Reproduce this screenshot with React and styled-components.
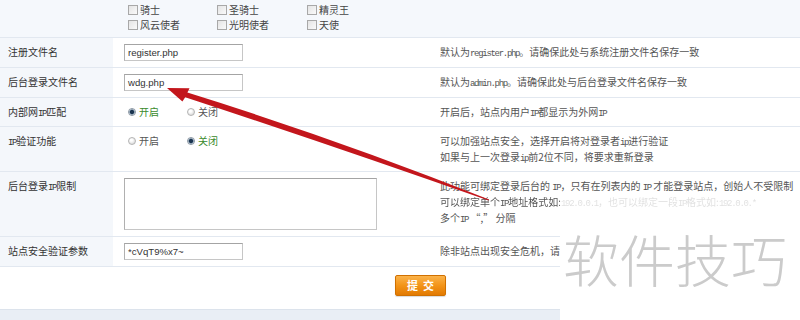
import React from "react";
import styled, { createGlobalStyle } from "styled-components";

const GlobalStyle = createGlobalStyle`
  html, body { margin: 0; padding: 0; background: #fff; }
  body { font-family: "Noto Sans CJK SC", "Liberation Sans", sans-serif; font-size: 10px; color: #333; }
`;

const Page = styled.div`
  position: relative;
  width: 800px;
  height: 320px;
  overflow: hidden;
  background: #fff;
`;

const Row = styled.div`
  display: grid;
  grid-template-columns: 113px 316px 1fr;
  border-bottom: 1px solid #e2e8f0;
  background: ${({ $tinted }) => ($tinted ? "#f5f8fc" : "#fff")};
`;

const LabelCell = styled.div`
  background: ${({ $plain }) => ($plain ? "transparent" : "#f4f7fb")};
  padding: ${({ $pad }) => $pad || "6px 0 6px 8px"};
  line-height: 16px;
  color: #333;
`;

const ValueCell = styled.div`
  padding: ${({ $pad }) => $pad || "6px 0 6px 11px"};
  line-height: 16px;
`;

const DescCell = styled.div`
  padding: 6px 0 6px 11px;
  line-height: 16px;
  color: #555;
  white-space: nowrap;
  min-width: 0;
`;

const DescLine = styled.div`
  height: 16px;
  overflow: hidden;
  width: ${({ $clip }) => ($clip ? "120px" : "auto")};
  ${({ $fade }) =>
    $fade &&
    `-webkit-mask-image: linear-gradient(to right, #000 120px, rgba(0,0,0,0.18) 120px);
     mask-image: linear-gradient(to right, #000 120px, rgba(0,0,0,0.18) 120px);`}
`;

const Latin = styled.span`
  font-family: "Liberation Mono", monospace;
  font-size: 9px;
  letter-spacing: -1.3px;
  line-height: 0;
`;

const CheckGrid = styled.div`
  display: grid;
  grid-template-columns: 89px 90px 90px;
  margin-left: 4px;
  line-height: 15px;
  color: #444;
`;

const CheckItem = styled.label`
  display: flex;
  align-items: center;
  gap: 2px;
`;

const CheckBox = styled.span`
  width: 8px;
  height: 8px;
  border: 1px solid #a8a8a8;
  background: linear-gradient(135deg, #e4e4e4, #fafafa);
`;

const TextInput = styled.div`
  box-sizing: border-box;
  width: 119px;
  height: 17px;
  border: 1px solid #c6c6c6;
  border-top-color: #a4a4a4;
  border-left-color: #b0b0b0;
  background: #fff;
  font-family: "Liberation Sans", Arial, sans-serif;
  font-size: 9.6px;
  line-height: 15px;
  padding-left: 3px;
  color: #333;
`;

const TextArea = styled.div`
  box-sizing: border-box;
  width: 253px;
  height: 52px;
  border: 1px solid #c6c6c6;
  border-top-color: #a4a4a4;
  border-left-color: #b0b0b0;
  background: #fff;
`;

const RadioGroup = styled.div`
  display: flex;
  margin-left: 4px;
`;

const RadioItem = styled.label`
  display: flex;
  align-items: center;
  gap: 3px;
  width: 59px;
  color: ${({ $on }) => ($on ? "#3a8a2c" : "#555")};
`;

const RadioDot = styled.span`
  box-sizing: border-box;
  width: 8px;
  height: 8px;
  border-radius: 50%;
  border: 1px solid ${({ $on }) => ($on ? "#8a96a2" : "#b4b4b4")};
  background: ${({ $on }) =>
    $on
      ? "radial-gradient(circle, #1c3550 0 1.6px, #5c7892 2.2px, #dfe6ec 3px)"
      : "radial-gradient(circle at 40% 35%, #fff 0 1px, #dcdcdc 4px)"};
`;

const SubmitRow = styled.div`
  padding: 8px 0 13px 395px;
  border-bottom: 1px solid #dce3ec;
`;

const SubmitButton = styled.button`
  box-sizing: border-box;
  display: block;
  width: 51px;
  height: 21px;
  border: 1px solid #d07000;
  border-radius: 2px;
  background: linear-gradient(#fbb34a, #f39418 50%, #e27a02);
  color: #fff;
  font-family: "Noto Sans CJK SC", sans-serif;
  font-size: 11px;
  font-weight: bold;
  letter-spacing: 5px;
  padding: 0 0 0 5px;
  line-height: 19px;
  box-shadow: 0 1px 1px rgba(0, 0, 0, 0.15);
`;

const Footer = styled.div`
  height: 14px;
  background: #e9eef5;
`;

const Overlay = styled.div`
  position: absolute;
  left: 560px;
  top: 212px;
  right: 0;
  bottom: 0;
  background: #fff;
  padding: 18px 0 0 3px;
`;

const Watermark = styled.div`
  font-family: "Noto Sans CJK SC", sans-serif;
  font-weight: 300;
  font-size: 56px;
  line-height: 1;
  color: #cbcbcb;
  white-space: nowrap;
`;

const ArrowLayer = styled.svg`
  position: absolute;
  left: 0;
  top: 0;
  pointer-events: none;
`;

const knights = ["骑士", "圣骑士", "精灵王", "风云使者", "光明使者", "天使"];

function Radios({ on }) {
  return (
    <RadioGroup>
      <RadioItem $on={on === 0}>
        <RadioDot $on={on === 0} />
        开启
      </RadioItem>
      <RadioItem $on={on === 1}>
        <RadioDot $on={on === 1} />
        关闭
      </RadioItem>
    </RadioGroup>
  );
}

export default function App() {
  return (
    <Page>
      <GlobalStyle />

      <Row $tinted>
        <LabelCell $plain $pad="2px 0 5px 8px" />
        <ValueCell $pad="2px 0 5px 11px">
          <CheckGrid>
            {knights.map((k) => (
              <CheckItem key={k}>
                <CheckBox />
                {k}
              </CheckItem>
            ))}
          </CheckGrid>
        </ValueCell>
        <DescCell />
      </Row>

      <Row>
        <LabelCell>注册文件名</LabelCell>
        <ValueCell>
          <TextInput>register.php</TextInput>
        </ValueCell>
        <DescCell>
          <DescLine>
            默认为<Latin>register.php</Latin>。请确保此处与系统注册文件名保存一致
          </DescLine>
        </DescCell>
      </Row>

      <Row>
        <LabelCell>后台登录文件名</LabelCell>
        <ValueCell>
          <TextInput>wdg.php</TextInput>
        </ValueCell>
        <DescCell>
          <DescLine>
            默认为<Latin>admin.php</Latin>。请确保此处与后台登录文件名保存一致
          </DescLine>
        </DescCell>
      </Row>

      <Row>
        <LabelCell>
          内部网<Latin>IP</Latin>匹配
        </LabelCell>
        <ValueCell>
          <Radios on={0} />
        </ValueCell>
        <DescCell>
          <DescLine>
            开启后，站点内用户<Latin>IP</Latin>都显示为外网<Latin>IP</Latin>
          </DescLine>
        </DescCell>
      </Row>

      <Row>
        <LabelCell>
          <Latin>IP</Latin>验证功能
        </LabelCell>
        <ValueCell>
          <Radios on={1} />
        </ValueCell>
        <DescCell>
          <DescLine>
            可以加强站点安全，选择开启将对登录者<Latin>ip</Latin>进行验证
          </DescLine>
          <DescLine>
            如果与上一次登录<Latin>ip</Latin>前2位不同，将要求重新登录
          </DescLine>
        </DescCell>
      </Row>

      <Row>
        <LabelCell>
          后台登录<Latin>IP</Latin>限制
        </LabelCell>
        <ValueCell>
          <TextArea />
        </ValueCell>
        <DescCell>
          <DescLine>
            此功能可绑定登录后台的 <Latin>IP</Latin>，只有在列表内的 <Latin>IP</Latin> 才能登录站点，创始人不受限制
          </DescLine>
          <DescLine $fade>
            可以绑定单个<Latin>IP</Latin>地址格式如:<Latin>192.0.0.1</Latin>，也可以绑定一段<Latin>IP</Latin>格式如:<Latin>192.0.0.*</Latin>
          </DescLine>
          <DescLine>
            多个<Latin>IP</Latin> “,” 分隔
          </DescLine>
        </DescCell>
      </Row>

      <Row>
        <LabelCell>站点安全验证参数</LabelCell>
        <ValueCell>
          <TextInput>*cVqT9%x7~</TextInput>
        </ValueCell>
        <DescCell>
          <DescLine $clip>除非站点出现安全危机，请不要修改此参数</DescLine>
        </DescCell>
      </Row>

      <SubmitRow>
        <SubmitButton>提交</SubmitButton>
      </SubmitRow>
      <Footer />

      <Overlay>
        <Watermark>软件技巧</Watermark>
      </Overlay>

      <ArrowLayer width="800" height="320" viewBox="0 0 800 320">
        <path
          d="M167 88 L189.5 88.2 L187.4 92.6 Q340 140 489 199.5 L488.5 200.6 Q335 146.5 185.2 97.2 L182.4 101.6 Z"
          fill="#c3161c"
        />
      </ArrowLayer>
    </Page>
  );
}
